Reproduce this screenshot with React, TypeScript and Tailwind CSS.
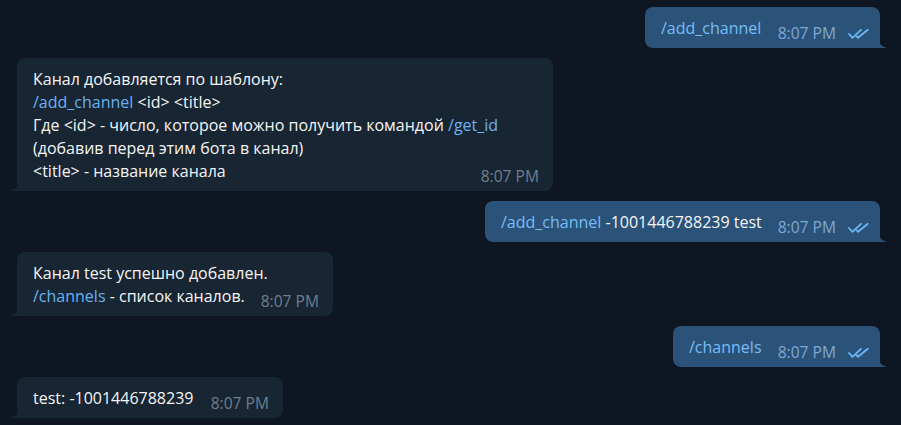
import type { ReactNode } from 'react';

interface BubbleProps {
  out?: boolean;
  width: string;
  lines: ReactNode[];
}

function Checks() {
  return (
    <svg width="21" height="10" viewBox="0 0 21 10" className="ml-[12px] inline-block" fill="none">
      <path d="M1 5 L4.5 8.8 L13 0.8" stroke="#6cb8f5" strokeWidth="1.8" strokeLinecap="round" strokeLinejoin="round" />
      <path d="M8.5 7.2 L10 8.8 L19.8 0.8" stroke="#6cb8f5" strokeWidth="1.8" strokeLinecap="round" strokeLinejoin="round" />
    </svg>
  );
}

function Tail({ out }: { out?: boolean }) {
  if (out) {
    return (
      <svg width="8" height="10" viewBox="0 0 8 10" className="absolute bottom-0 right-[-7px]">
        <path d="M0 0 C0 5.5 2.5 8.5 7 9.4 Q8 9.8 7 10 L0 10 Z" fill="#2b5278" />
      </svg>
    );
  }
  return (
    <svg width="8" height="10" viewBox="0 0 8 10" className="absolute bottom-0 left-[-7px]">
      <path d="M8 0 C8 5.5 5.5 8.5 1 9.4 Q0 9.8 1 10 L8 10 Z" fill="#182533" />
    </svg>
  );
}

function Bubble({ out, width, lines }: BubbleProps) {
  return (
    <div
      className={`relative flex items-end pt-[10px] pb-[8px] pl-[16px] ${width} ${
        out
          ? 'mr-[21px] self-end rounded-[8px] rounded-br-none bg-[#2b5278] pr-[11px]'
          : 'ml-[17px] self-start rounded-[8px] rounded-bl-none bg-[#182533] pr-[14px]'
      }`}
    >
      <div className="min-w-0 flex-1 text-[16px] leading-[23px] text-[#f5f5f5]">
        {lines.map((line, i) => (
          <div key={i} className="whitespace-nowrap">
            {line}
          </div>
        ))}
      </div>
      <div
        className={`flex shrink-0 translate-y-[5px] items-baseline whitespace-nowrap text-[15.6px] leading-[23px] ${
          out ? 'text-[#7da8d3]' : 'text-[#6d7f8f]'
        }`}
      >
        <span>8:07 PM</span>
        {out && <Checks />}
      </div>
      <Tail out={out} />
    </div>
  );
}

const inLink = 'text-[#6ab2f2]';
const outLink = 'text-[#77bdf7]';

export default function App() {
  return (
    <div className="flex min-h-screen flex-col gap-[10px] bg-[#0e1621] pt-[7px] font-['Open_Sans',sans-serif]">
      <Bubble out width="w-[235px]" lines={[<span className={outLink}>/add_channel</span>]} />
      <Bubble
        width="w-[536px]"
        lines={[
          'Канал добавляется по шаблону:',
          <>
            <span className={inLink}>/add_channel</span> {'<id> <title>'}
          </>,
          <>
            {'Где <id> - число, которое можно получить командой '}
            <span className={inLink}>/get_id</span>
          </>,
          '(добавив перед этим бота в канал)',
          '<title> - название канала',
        ]}
      />
      <Bubble
        out
        width="w-[395px]"
        lines={[
          <>
            <span className={outLink}>/add_channel</span> -1001446788239 test
          </>,
        ]}
      />
      <Bubble
        width="w-[316px]"
        lines={[
          'Канал test успешно добавлен.',
          <>
            <span className={inLink}>/channels</span> - список каналов.
          </>,
        ]}
      />
      <Bubble out width="w-[207px]" lines={[<span className={outLink}>/channels</span>]} />
      <Bubble width="w-[266px]" lines={['test: -1001446788239']} />
    </div>
  );
}
